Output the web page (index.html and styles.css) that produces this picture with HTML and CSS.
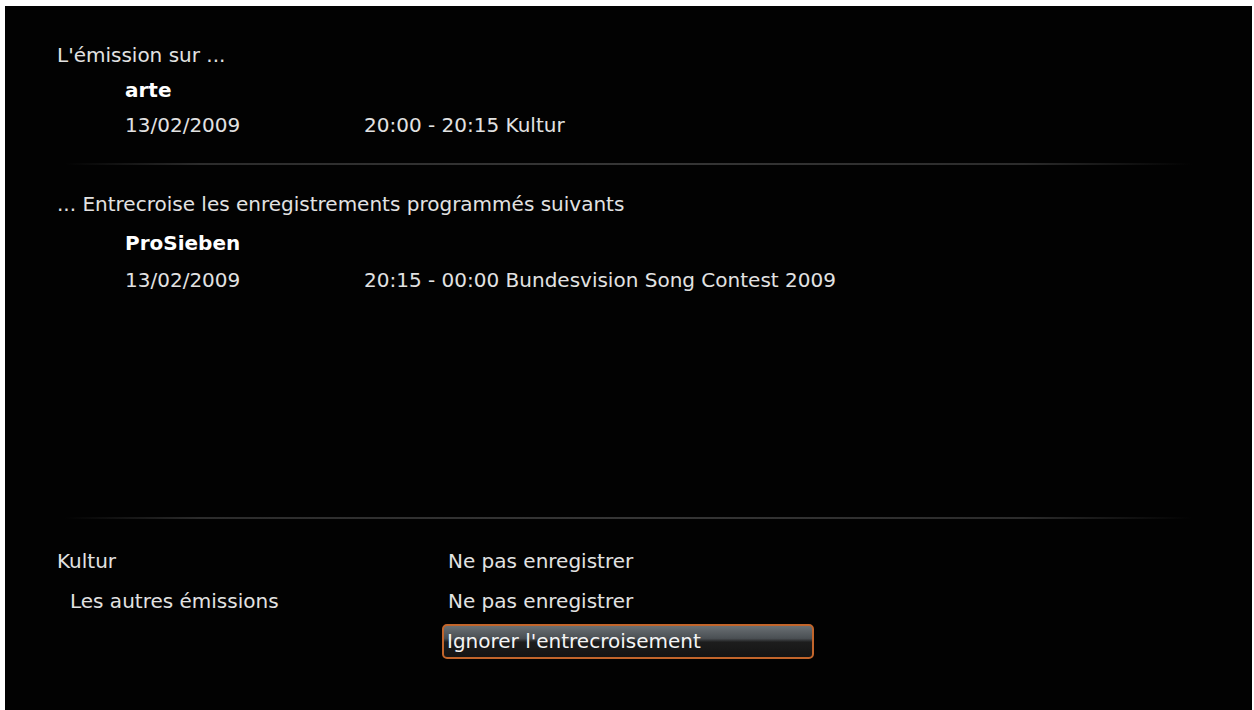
FILE: index.html
```html
<!DOCTYPE html>
<html lang="fr">
<head>
<meta charset="utf-8">
<link rel="stylesheet" href="styles.css">
</head>
<body>
<div class="screen">
  <section class="block block-top">
    <div class="heading">L'émission sur ...</div>
    <div class="channel">arte</div>
    <div class="entry"><span class="date">13/02/2009</span><span class="time">20:00 - 20:15 Kultur</span></div>
  </section>
  <div class="sep sep-1"></div>
  <section class="block block-mid">
    <div class="heading">... Entrecroise les enregistrements programmés suivants</div>
    <div class="channel channel-2">ProSieben</div>
    <div class="entry"><span class="date">13/02/2009</span><span class="time">20:15 - 00:00 Bundesvision Song Contest 2009</span></div>
  </section>
  <div class="sep sep-2"></div>
  <section class="options">
    <div class="opt"><span class="opt-label">Kultur</span><span class="opt-value">Ne pas enregistrer</span></div>
    <div class="opt"><span class="opt-label indent">Les autres émissions</span><span class="opt-value">Ne pas enregistrer</span></div>
    <div class="opt"><span class="opt-label"></span><span class="btn">Ignorer l'entrecroisement</span></div>
  </section>
</div>
</body>
</html>
```
FILE: styles.css
```css
html, body {
  margin: 0;
  padding: 0;
  background: #ffffff;
  height: 100%;
}
body {
  font-family: "DejaVu Sans", Verdana, sans-serif;
  font-size: 20px;
  color: #e2e2e2;
}
.screen {
  margin: 6px 2px 0 5px;
  height: 704px;
  background: #020202;
  box-sizing: border-box;
  padding-top: 32px;
  display: flex;
  flex-direction: column;
}
.block {
  padding-left: 52px;
}
.heading, .channel, .entry {
  height: 35px;
  line-height: 35px;
  white-space: nowrap;
}
.channel {
  padding-left: 68px;
  font-weight: bold;
  color: #ffffff;
}
.entry {
  padding-left: 68px;
  display: flex;
}
.date {
  width: 239px;
}
.sep {
  height: 2px;
  margin-left: 60px;
  margin-right: 60px;
  background: linear-gradient(to right, rgba(60,60,60,0), #2c2c2c 12%, #363636 50%, #2c2c2c 85%, rgba(60,60,60,0));
}
.sep-1 {
  margin-top: 20px;
}
.block-mid {
  padding-top: 20px;
}
.block-mid .heading {
  height: 38px;
  line-height: 38px;
}
.channel-2 {
  height: 40px;
  line-height: 40px;
}
.sep-2 {
  margin-top: 219px;
}
.options {
  padding-left: 52px;
  padding-top: 22px;
}
.opt {
  display: flex;
  height: 40px;
  align-items: center;
  white-space: nowrap;
}
.opt-label {
  width: 391px;
}
.indent {
  padding-left: 13px;
  box-sizing: border-box;
}
.btn {
  margin-left: -6px;
  width: 372px;
  height: 35px;
  box-sizing: border-box;
  border: 2px solid #c2652b;
  border-radius: 5px;
  padding-left: 3px;
  line-height: 31px;
  color: #f4f4f4;
  background: linear-gradient(to bottom, #6a7074 0%, #4a4f53 40%, #1d1d1d 52%, #141414 100%);
}
```
